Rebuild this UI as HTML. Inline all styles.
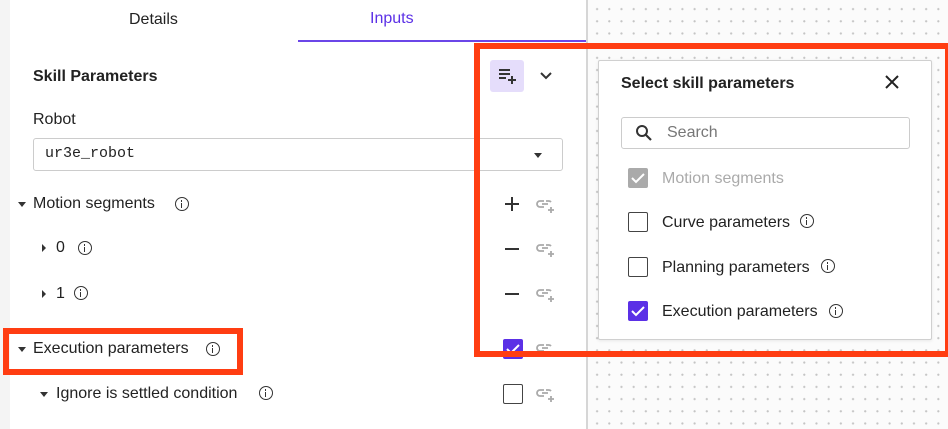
<!DOCTYPE html>
<html><head><meta charset="utf-8"><style>
*{margin:0;padding:0;box-sizing:border-box}
body{width:948px;height:429px;overflow:hidden;position:relative;font-family:"Liberation Sans",sans-serif;color:#222;background:#fff}
.abs{position:absolute}
.bg{left:588px;top:0;width:360px;height:429px;background-color:#fbfbfb;background-image:radial-gradient(circle,#c4c4c4 0.9px,transparent 1.3px);background-size:12.2px 12.2px;background-position:3px 3px}
.strip{left:0;top:0;width:10px;height:429px;background:#f4f4f4}
.div{left:586px;top:0;width:2px;height:429px;background:#d6d6d6}
.t{position:absolute;font-size:16px;white-space:nowrap}
.info{position:absolute;width:14px;height:14px;border:1.5px solid #333;border-radius:50%}
.info:before{content:"";position:absolute;left:4.7px;top:5px;width:1.6px;height:5px;background:#333}
.info:after{content:"";position:absolute;left:4.7px;top:2px;width:1.6px;height:1.6px;background:#333}
.cb{position:absolute;width:20px;height:20px;border:1.6px solid #444;border-radius:2px;background:#fff}
.cbc{border:none;background:#5b30e6}
.tri{position:absolute;width:0;height:0}
.dn{border-left:4px solid transparent;border-right:4px solid transparent;border-top:5px solid #333}
.rt{border-top:4px solid transparent;border-bottom:4px solid transparent;border-left:4px solid #333}
.red{position:absolute;border:6px solid #ff3d12}
</style></head><body>
<div class="abs bg"></div>
<div class="abs strip"></div>
<div class="abs div"></div>
<div class="t" style="left:129px;top:11px;font-size:16px">Details</div>
<div class="t" style="left:370px;top:10px;color:#5b30e6">Inputs</div>
<div class="abs" style="left:298px;top:40px;width:288px;height:2px;background:#6b46e8"></div>
<div class="t" style="left:33px;top:68px;font-weight:bold">Skill Parameters</div>
<div class="abs" style="left:490px;top:60px;width:34px;height:32px;background:#e5ddfb;border-radius:3px"></div>
<svg class="abs" style="left:496px;top:64px" width="24" height="24" viewBox="0 0 24 24"><path d="M3 6h11M3 10h11M3 14h7M16 12v8M12 16h8" stroke="#333" stroke-width="2" fill="none"/></svg>
<svg class="abs" style="left:538px;top:68px" width="16" height="16" viewBox="0 0 16 16"><path d="M3 5l5 5 5-5" stroke="#333" stroke-width="2" fill="none"/></svg>
<div class="t" style="left:33px;top:111px">Robot</div>
<div class="abs" style="left:33px;top:138px;width:530px;height:33px;border:1px solid #ccc;border-radius:3px"></div>
<div class="t" style="left:45px;top:145px;font-family:'Liberation Mono',monospace;font-size:15px">ur3e_robot</div>
<div class="tri dn" style="left:534px;top:153px"></div>
<div class="tri dn" style="left:18px;top:202px"></div>
<div class="t" style="left:33px;top:195px">Motion segments</div>
<div class="info" style="left:175px;top:197px"></div>
<div class="tri rt" style="left:42px;top:244px"></div>
<div class="t" style="left:56px;top:239px">0</div>
<div class="info" style="left:78px;top:241px"></div>
<div class="tri rt" style="left:42px;top:290px"></div>
<div class="t" style="left:56px;top:285px">1</div>
<div class="info" style="left:74px;top:286px"></div>
<div class="tri dn" style="left:18px;top:347px"></div>
<div class="t" style="left:33px;top:340px">Execution parameters</div>
<div class="info" style="left:206px;top:342px"></div>
<div class="tri dn" style="left:40px;top:392px"></div>
<div class="t" style="left:56px;top:385px">Ignore is settled condition</div>
<div class="info" style="left:259px;top:386px"></div>
<svg class="abs" style="left:503px;top:195px" width="18" height="18"><path d="M9 2v14M2 9h14" stroke="#333" stroke-width="2"/></svg>
<svg class="abs" style="left:503px;top:240px" width="18" height="18"><path d="M2 9h14" stroke="#333" stroke-width="2"/></svg>
<svg class="abs" style="left:503px;top:285px" width="18" height="18"><path d="M2 9h14" stroke="#333" stroke-width="2"/></svg>
<div class="cb cbc" style="left:503px;top:339px"></div>
<div class="cb" style="left:503px;top:384px"></div>
<svg class="abs" style="left:535px;top:196px" width="22" height="18"><g stroke="#aaa" stroke-width="1.8" fill="none"><path d="M9 5H5a3 3 0 0 0 0 6h4M7 8h6M11 5h3a3 3 0 0 1 2 1M16 11v6M13 14h6"/></g></svg>
<svg class="abs" style="left:535px;top:240px" width="22" height="18"><g stroke="#aaa" stroke-width="1.8" fill="none"><path d="M9 5H5a3 3 0 0 0 0 6h4M7 8h6M11 5h3a3 3 0 0 1 2 1M16 11v6M13 14h6"/></g></svg>
<svg class="abs" style="left:535px;top:285px" width="22" height="18"><g stroke="#aaa" stroke-width="1.8" fill="none"><path d="M9 5H5a3 3 0 0 0 0 6h4M7 8h6M11 5h3a3 3 0 0 1 2 1M16 11v6M13 14h6"/></g></svg>
<svg class="abs" style="left:535px;top:340px" width="22" height="18"><g stroke="#aaa" stroke-width="1.8" fill="none"><path d="M9 5H5a3 3 0 0 0 0 6h4M7 8h6M11 5h3a3 3 0 0 1 2 1M16 11v6M13 14h6"/></g></svg>
<svg class="abs" style="left:535px;top:385px" width="22" height="18"><g stroke="#aaa" stroke-width="1.8" fill="none"><path d="M9 5H5a3 3 0 0 0 0 6h4M7 8h6M11 5h3a3 3 0 0 1 2 1M16 11v6M13 14h6"/></g></svg>
<!-- popup -->
<div class="abs" style="left:598px;top:60px;width:334px;height:280px;background:#fff;border:1px solid #d0d0d0;border-radius:2px;box-shadow:0 1px 3px rgba(0,0,0,.08)"></div>
<div class="t" style="left:621px;top:75px;font-weight:bold">Select skill parameters</div>
<svg class="abs" style="left:884px;top:74px" width="16" height="16"><path d="M2 2l12 12M14 2L2 14" stroke="#222" stroke-width="2"/></svg>
<div class="abs" style="left:621px;top:117px;width:289px;height:32px;border:1px solid #ccc;border-radius:3px"></div>
<svg class="abs" style="left:635px;top:124px" width="18" height="18"><circle cx="7" cy="7" r="5" stroke="#333" stroke-width="2" fill="none"/><path d="M11 11l5 5" stroke="#333" stroke-width="2.2"/></svg>
<div class="t" style="left:667px;top:124px;color:#777">Search</div>
<div class="cb" style="left:628px;top:168px;border:none;background:#aaa"></div>
<div class="t" style="left:662px;top:170px;color:#aaa">Motion segments</div>
<div class="cb" style="left:628px;top:212px"></div>
<div class="t" style="left:662px;top:214px">Curve parameters</div>
<div class="info" style="left:800px;top:214px"></div>
<div class="cb" style="left:628px;top:257px"></div>
<div class="t" style="left:662px;top:259px">Planning parameters</div>
<div class="info" style="left:821px;top:259px"></div>
<div class="cb cbc" style="left:628px;top:301px"></div>
<div class="t" style="left:662px;top:303px">Execution parameters</div>
<div class="info" style="left:829px;top:304px"></div>
<svg class="abs" style="left:628px;top:168px" width="20" height="20"><path d="M4 10l4 4 8-8" stroke="#fff" stroke-width="2" fill="none"/></svg>
<svg class="abs" style="left:628px;top:301px" width="20" height="20"><path d="M4 10l4 4 8-8" stroke="#fff" stroke-width="2" fill="none"/></svg>
<svg class="abs" style="left:503px;top:339px" width="20" height="20"><path d="M4 10l4 4 8-8" stroke="#fff" stroke-width="2" fill="none"/></svg>
<div class="red" style="left:474px;top:43px;width:477px;height:314px"></div>
<div class="red" style="left:3px;top:328px;width:240px;height:47px"></div>
</body></html>
